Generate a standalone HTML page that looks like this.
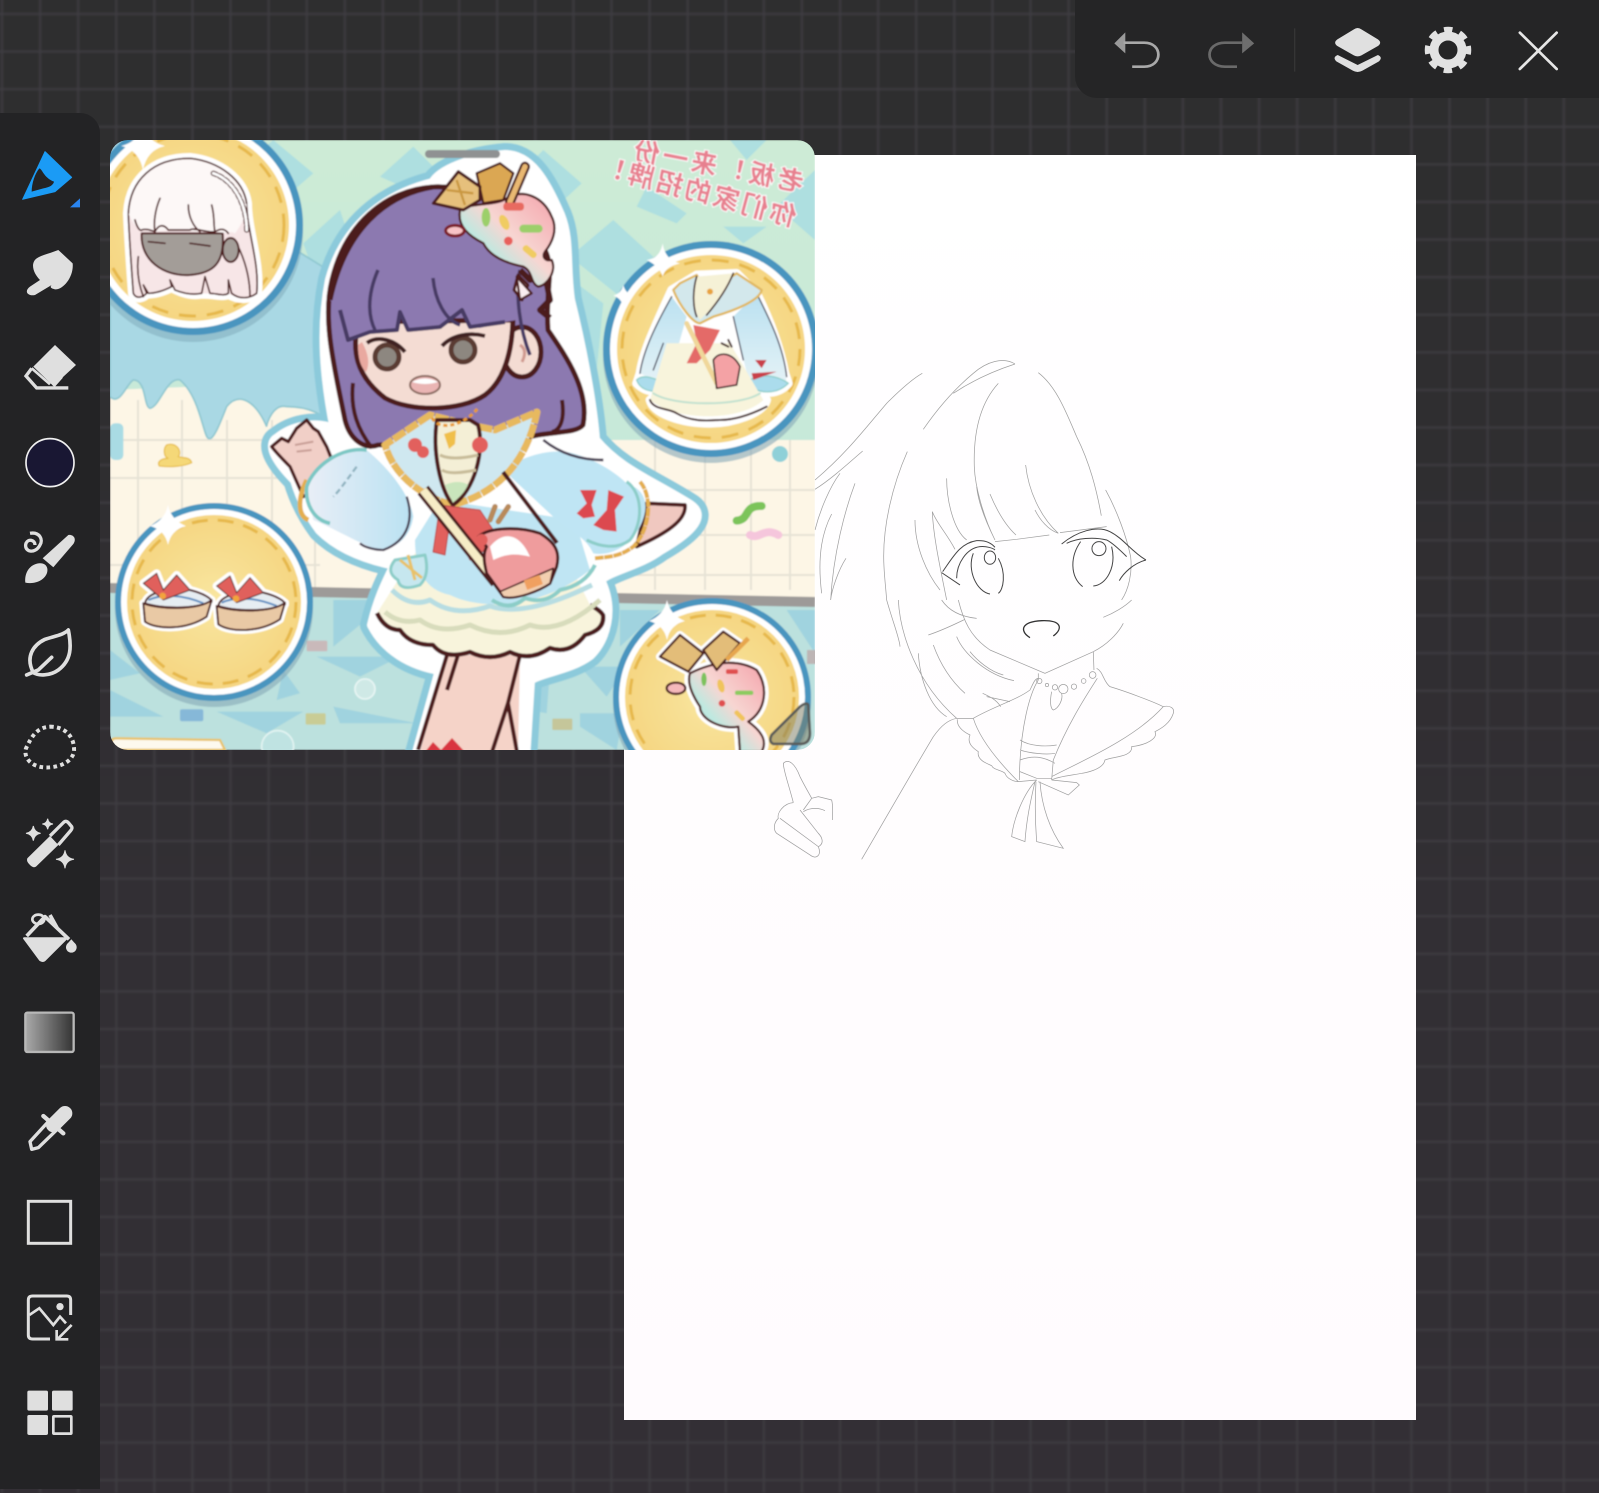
<!DOCTYPE html>
<html><head><meta charset="utf-8"><title>Canvas</title>
<style>
html,body{margin:0;padding:0;width:1599px;height:1489px;overflow:hidden;background:#312e33}
#bg{position:absolute;left:-4px;top:-4px;width:1607px;height:1497px;filter:blur(1px);
background-image:linear-gradient(#3f3d42 2px,transparent 2px),linear-gradient(90deg,#3f3d42 2px,transparent 2px),linear-gradient(#2e2e2f 0,#2f2e30 400px,#322f34 900px,#332f35 100%);
background-size:38.1px 37.6px,38.1px 37.6px,100% 100%;background-position:0 17px,5px 0,0 0}
#paper{position:absolute;left:624px;top:155px;width:792px;height:1265px;background:linear-gradient(#fff,#fffbfe)}
#lt{position:absolute;left:0;top:113px;width:100px;height:1376px;background:#232325;border-top-right-radius:20px}
#rt{position:absolute;left:1075px;top:0;width:524px;height:98px;background:#252526;border-bottom-left-radius:22px}
svg{position:absolute;left:0;top:0}
</style></head><body>
<div id="bg"></div><div id="paper"></div>
<svg width="1599" height="1489" viewBox="0 0 1599 1489" xmlns="http://www.w3.org/2000/svg" style="font-family:'Liberation Sans','Noto Sans CJK SC',sans-serif">
<defs>
<clipPath id="win"><rect x="110" y="140" width="705" height="610" rx="18"/></clipPath>
<linearGradient id="mint" x1="0" y1="0" x2="0" y2="1"><stop offset="0" stop-color="#cdebd6"/><stop offset="1" stop-color="#bfe6dc"/></linearGradient>
<linearGradient id="ice" x1="1" y1="0" x2="0" y2="1"><stop offset="0" stop-color="#f4a3ab"/><stop offset=".45" stop-color="#f7d6d2"/><stop offset=".65" stop-color="#bfe8e0"/><stop offset="1" stop-color="#a6e0dc"/></linearGradient>
<linearGradient id="sl" x1="0" y1="0" x2="1" y2="0"><stop offset="0" stop-color="#e9eef6"/><stop offset="1" stop-color="#b9e1f2"/></linearGradient>
<linearGradient id="sl2" x1="0" y1="0" x2="0" y2="1"><stop offset="0" stop-color="#b9e0f1"/><stop offset="1" stop-color="#e6f3f6"/></linearGradient>
<linearGradient id="grad" x1="0" y1="0" x2="1" y2="0"><stop offset="0" stop-color="#aaa"/><stop offset="1" stop-color="#333"/></linearGradient>
<radialGradient id="yel"><stop offset="0" stop-color="#f9e6a0"/><stop offset="1" stop-color="#f5d682"/></radialGradient>
<filter id="soft"><feGaussianBlur stdDeviation=".7"/></filter>
<filter id="soft2"><feGaussianBlur stdDeviation=".3"/></filter>
</defs>

<!-- sketch -->
<g filter="url(#soft2)">
<g fill="none" stroke="#a0a0a0" stroke-width="2.2" transform="translate(760 340) scale(.3333)">
<path d="M165 420C260 340 320 260 380 190C420 150 460 115 487 100M165 448C210 420 260 375 308 333M490 268C530 210 580 150 640 100C680 65 730 50 765 72M580 160C640 120 710 90 765 72M715 130C660 190 640 280 643 380C645 440 670 530 705 600M835 98C890 140 920 220 950 290C990 370 1010 450 1024 527M797 375C805 450 840 530 895 580M825 510C840 540 865 570 895 580M690 462C710 510 735 555 768 585M650 440C655 490 680 550 705 600M705 605L770 598L868 585M900 578L1040 560M1037 450C1070 510 1100 590 1112 650C1118 700 1105 750 1085 780M442 335C400 430 365 560 372 680C374 720 378 750 380 780M285 430C255 510 220 640 212 780M215 522C190 570 170 640 185 760M240 400C210 440 180 510 165 570M560 415C560 480 580 570 620 600M585 628C560 580 530 550 517 515C520 590 540 680 560 780M465 540C465 620 500 700 540 750M258 655C235 690 215 750 212 780"/>
<g stroke="#454545" stroke-width="3">
<path d="M548 695C580 650 600 610 650 602C680 600 695 610 705 622M590 715C590 670 620 625 660 620C680 618 700 625 705 630M545 698L600 735M640 640C620 690 650 755 690 762M715 655C740 700 730 750 715 760"/><ellipse cx="690" cy="653" rx="17" ry="20"/>
<path d="M905 612C950 575 1010 555 1050 575C1090 595 1115 635 1158 660M920 610C950 595 1000 590 1040 600C1060 610 1090 640 1100 650M1158 660C1120 670 1090 700 1078 722M962 605C930 650 930 710 968 740M1000 738C1040 735 1070 680 1055 620"/><circle cx="1017" cy="626" r="21"/>
</g></g>
<g fill="none" stroke="#a0a0a0" stroke-width="2.2" transform="translate(760 600) scale(.3333)">
<path d="M810 113C780 95 780 65 845 62C905 60 910 85 880 108" stroke="#333" stroke-width="4"/>
<path d="M595 0C610 60 630 110 690 150L855 220L1000 155C1040 135 1075 100 1090 70M1000 155L1002 210M835 220L835 240M380 0C400 70 420 120 420 140M415 0C420 100 470 250 590 355M475 160C480 240 510 320 560 350M520 135C540 190 570 240 615 280M590 110C610 160 680 225 762 242M630 155C650 180 690 215 730 225M505 105C550 90 590 70 615 58M668 280C690 290 710 300 722 320M680 290L750 305M545 0C565 30 600 50 650 55M1030 52C1060 40 1095 20 1115 0"/>
<path d="M305 778C380 650 460 510 520 410C545 375 565 360 590 355L640 355C700 320 770 300 810 270C820 250 825 235 835 235M640 355C660 420 720 490 775 545M592 358C590 380 610 395 630 405C620 430 640 445 655 455C650 480 680 490 695 497C700 510 725 510 735 520C740 535 760 545 775 545L830 540M835 240C810 280 780 380 778 540M1012 235C970 300 920 380 880 480L875 540M875 530C950 490 1120 420 1210 320C1180 305 1100 275 1050 260C1030 245 1030 215 1010 205M1210 320C1230 315 1245 325 1240 340C1230 370 1205 385 1185 395C1195 415 1160 435 1115 440C1120 470 1060 470 1035 480C1030 510 970 520 965 520C940 525 890 530 875 540M875 540L950 548L958 555L925 585L835 545M830 540C790 580 760 660 755 710L795 725C800 650 815 590 825 545M840 545C845 620 870 690 910 745L830 725C825 660 825 600 828 545M780 515L830 535L875 535M780 420C810 440 860 440 890 435M780 450C810 460 860 465 885 460M780 480C820 465 850 470 885 490"/>
<circle cx="838" cy="243" r="8"/><circle cx="861" cy="255" r="5"/><circle cx="885" cy="262" r="8"/><circle cx="910" cy="267" r="14"/><circle cx="942" cy="260" r="8"/><circle cx="971" cy="243" r="7"/><circle cx="998" cy="225" r="10"/>
<path d="M875 275C870 300 870 325 880 330C895 325 910 300 905 280"/>
<path d="M100 608C85 550 70 510 70 490C85 475 105 490 120 530C135 560 150 585 155 595L130 630M155 595L175 590L215 600C220 620 218 640 217 660M130 635C155 620 180 625 195 632M100 608C70 610 50 640 55 655C40 670 40 690 50 700L150 765C170 780 185 765 175 740C195 730 185 710 175 700L120 630M60 655L175 740"/>
</g></g>

<!-- reference image window -->
<g clip-path="url(#win)"><g filter="url(#soft)">
<rect x="110" y="140" width="705" height="610" fill="url(#mint)"/>
<g transform="translate(480 130) scale(.3333)" fill="#aedfe0">
<polygon points="190,60 305,160 230,230 120,130"/><polygon points="400,270 520,380 420,500 270,380"/><polygon points="500,170 620,250 590,280 470,230"/><polygon points="750,30 860,30 800,90"/><polygon points="890,230 1005,330 1005,120"/><polygon points="730,290 860,290 790,340"/><polygon points="250,430 370,520 350,720 240,620"/>
</g>
<g transform="translate(100 130) scale(.3333)" fill="#aedfe0"><polygon points="520,30 640,130 570,190 450,90"/><polygon points="840,140 940,50 1010,120 930,180"/><polygon points="610,340 720,240 760,360 660,480"/></g>
<polygon points="110,390 360,380 600,500 600,440 815,440 815,604 110,592" fill="#fdf6e6"/>
<g stroke="#e6e2d6" stroke-width="2" fill="none"><path d="M110 440H340M110 478H310M110 565H320M610 490H815M610 535H815M600 575H815M138 400V590M182 400V590M227 420V590M272 420V590M315 500V590M655 440V590M705 440V590M751 440V590M790 440V590"/></g>
<g transform="translate(100 130) scale(.3333)">
<path d="M30 30H360L330 200 700 430V900C680 850 620 830 560 830C520 820 500 880 500 890C470 820 420 780 380 830C360 880 340 935 325 925C310 920 300 800 240 750C200 740 180 830 150 835C130 830 140 750 100 750C80 760 60 830 30 800Z" fill="#a9d8e4" stroke="#8fc7d0" stroke-width="5"/>
<rect x="30" y="880" width="40" height="110" rx="15" fill="#a9dbe4"/>
</g>
<polygon points="110,592 815,604 815,750 110,750" fill="#bce1de"/>
<g transform="translate(100 440) scale(.3333)" fill="#a0d3df"><polygon points="30,630 120,700 30,720"/><polygon points="650,650 900,650 780,710"/><polygon points="30,750 190,830 30,830"/><polygon points="350,815 610,815 500,880"/><polygon points="700,800 950,850 720,850"/><polygon points="700,480 810,480 810,530 700,620"/><polygon points="550,690 600,760 530,780"/></g>
<g transform="translate(440 440) scale(.3333)" fill="#a0d3df"><polygon points="260,680 330,690 320,820 260,810"/><polygon points="420,680 560,680 500,770"/><polygon points="420,820 550,820 530,930 420,860"/><polygon points="540,510 660,510 540,620"/><polygon points="1040,510 1125,510 1125,640"/></g>
<line x1="110" y1="588" x2="815" y2="602" stroke="#9d9a98" stroke-width="10"/>
<rect x="807" y="650" width="10" height="14" fill="#bdb5b5"/>
<g transform="translate(100 440) scale(.3333)">
<rect x="620" y="602" width="62" height="32" rx="4" fill="#c9b9ba"/><rect x="240" y="808" width="70" height="36" rx="6" fill="#86b8d8"/><rect x="617" y="820" width="60" height="34" rx="4" fill="#c9cc95"/>
<circle cx="795" cy="747" r="30" fill="#cfe9e6" stroke="#e9f6f4" stroke-width="5"/><circle cx="533" cy="920" r="48" fill="#bfe3e2" stroke="#e3f4f2" stroke-width="5"/>
<path d="M35 930V905Q35 895 50 895L360 900L375 930Z" fill="#fdf9ee" stroke="#e8c26a" stroke-width="7"/>
<path d="M200 15C190 25 190 50 205 55C185 55 170 65 178 78C210 82 250 80 275 68C270 50 250 55 235 50C248 30 225 5 200 15Z" fill="#f5d878" stroke="#e8c050" stroke-width="4"/>
</g>
<g transform="translate(440 440) scale(.3333)" fill="none" stroke-linecap="round">
<rect x="337" y="836" width="60" height="34" rx="3" fill="#c5c69a"/>
<path d="M890 242C930 240 910 195 965 198" stroke="#7bc45a" stroke-width="24"/>
<path d="M930 285C960 300 970 260 1015 285" stroke="#f5c6dc" stroke-width="24"/>
<circle cx="1020" cy="42" r="24" fill="#8fd0d8"/>
</g>

<!-- circle 1 -->
<circle cx="193" cy="232" r="110" fill="#86b1bf" opacity=".6"/><circle cx="193" cy="225" r="110" fill="#4a95bf"/><circle cx="193" cy="225" r="103" fill="#fff"/><circle cx="193" cy="225" r="96" fill="url(#yel)"/><circle cx="193" cy="225" r="91" fill="none" stroke="#e6b84c" stroke-width="3" stroke-dasharray="17 11"/>
<path d="M143 122Q147 142 165 146Q147 150 143 170Q139 150 121 146Q139 142 143 122Z" fill="#fff"/>
<g transform="translate(100 130) scale(.3333)" stroke="#4c1a1d" stroke-width="6" stroke-linejoin="round" stroke-linecap="round">
<path d="M270 85C160 85 90 150 85 250C88 330 95 420 100 490C110 510 130 500 140 490C170 490 195 480 215 470C250 490 280 495 305 490C350 490 370 500 385 490C420 510 450 505 470 490C480 400 440 300 440 220C430 150 360 95 270 85Z" fill="#fff" stroke="#fff" stroke-width="32"/>
<path d="M85 250C88 330 95 420 100 490C110 510 130 500 140 490C170 490 195 480 215 470C250 490 280 495 305 490C350 490 370 500 385 490C420 510 450 505 470 490C480 400 440 300 440 220L85 220Z" fill="#f7e6e7" stroke="none"/>
<path d="M115 380C110 420 115 460 130 500M85 250C88 330 95 420 100 490C110 510 130 500 140 490L130 465L145 490C170 490 195 480 215 470L210 450L225 480C250 490 280 495 305 490L315 440L330 490C350 490 370 500 385 490L385 450L395 490C420 510 450 505 470 490C480 400 440 300 440 220M410 340C440 400 450 450 450 500" fill="none" stroke-width="5"/>
<ellipse cx="392" cy="360" rx="24" ry="36" fill="#a39d98"/>
<path d="M125 310C120 390 190 440 270 435C340 430 375 400 368 310Z" fill="#a39d98"/>
<path d="M85 250C90 150 160 85 270 85C360 95 430 150 440 220C440 260 420 290 405 310C395 305 390 305 385 310L345 305L300 305L205 300L165 305L125 300C110 295 95 275 85 250Z" fill="#fdf8f7" stroke="none"/>
<path d="M85 250C90 150 160 85 270 85C360 95 430 150 440 220M105 270C110 290 120 305 125 300C135 295 150 300 165 305C175 285 190 280 205 300L270 300C280 290 320 310 345 305C355 300 370 290 385 310M180 205C165 240 160 280 165 305M265 225C265 260 280 290 300 305M335 225C345 260 340 290 345 305" fill="none" stroke-width="5"/>
<path d="M145 335L195 340M270 340L330 348" fill="none" stroke-width="5"/>
<path d="M340 130C400 150 440 220 440 300" fill="none" stroke-width="16" stroke-dasharray="10 10"/>
<path d="M340 130C400 150 440 220 440 300" fill="none" stroke="#fff" stroke-width="9" stroke-dasharray="14 6"/>
</g>

<!-- circle 2 -->
<circle cx="711" cy="355" r="108" fill="#86a9b8" opacity=".6"/><circle cx="711" cy="349" r="108" fill="#4a95bf"/><circle cx="711" cy="349" r="101" fill="#fff"/><circle cx="711" cy="349" r="94" fill="url(#yel)"/><circle cx="711" cy="349" r="89" fill="none" stroke="#e6b84c" stroke-width="3" stroke-dasharray="17 11"/>
<g transform="translate(480 130) scale(.3333)" stroke-linejoin="round" stroke-linecap="round">
<path d="M548 340Q555 390 600 400Q555 410 548 440Q540 410 500 390Q540 385 548 340Z" fill="#fff"/><path d="M430 465Q436 490 460 497Q436 502 430 530Q424 505 400 497Q424 490 430 465Z" fill="#fff"/>
<path d="M575 480C530 580 490 660 480 730L470 760C500 790 540 790 560 770L510 810C520 850 600 880 690 880C760 880 850 850 860 810L800 770C850 800 900 790 925 760L915 730C900 650 870 570 830 490L770 430L650 435Z" fill="#fff" stroke="#fff" stroke-width="26"/>
<path d="M575 500C530 580 490 660 480 730L560 770L620 560ZM760 560L830 490C870 570 910 650 920 760L810 770Z" fill="url(#sl2)"/>
<path d="M575 500C530 580 490 660 480 730M550 640L520 720M830 490C870 570 910 650 920 740M760 560L790 690" fill="none" stroke="#3f3f55" stroke-width="4"/>
<path d="M470 750C490 730 520 745 560 760L540 785C510 785 480 780 470 750ZM810 750C840 730 890 735 925 760C890 795 840 790 810 770Z" fill="#abdcec" stroke="#8ccdc8" stroke-width="4"/>
<path d="M560 640L750 640L850 810C790 870 600 880 510 810Z" fill="#f8f4dc"/>
<path d="M520 790C580 830 780 830 840 790" fill="none" stroke="#bfe0cf" stroke-width="6"/>
<path d="M510 810C520 840 570 835 590 850C640 880 700 870 720 870C780 870 840 840 860 830" fill="none" stroke="#3d1c1e" stroke-width="6"/>
<path d="M600 460L580 480C600 530 640 580 660 580L700 560C770 540 840 510 845 480L770 430L740 450L660 450L650 435Z" fill="#d3e8ec" stroke="#e0b860" stroke-width="7"/>
<path d="M650 440C635 480 640 540 660 570C700 530 750 480 760 430Z" fill="#f5f1d6"/>
<path d="M650 440C638 480 638 530 650 560M760 430C740 480 710 520 680 555" fill="none" stroke="#3d1c1e" stroke-width="5"/>
<path d="M640 585L720 600L690 660L650 700L620 700L650 640Z" fill="#e46a68"/>
<line x1="620" y1="580" x2="710" y2="760" stroke="#f0d79a" stroke-width="14"/>
<path d="M700 690C720 660 760 670 780 710L770 765L710 775Z" fill="#f4a2a5" stroke="#3d1c1e" stroke-width="5"/>
<path d="M725 640L745 650M745 630L755 650" stroke="#3d1c1e" stroke-width="6"/>
<path d="M825 690L860 690L845 715ZM815 730L890 725L820 750Z" fill="#c93f4a"/>
<circle cx="690" cy="485" r="9" fill="#e8a33c"/>
</g>

<!-- circle 3 -->
<circle cx="214" cy="608" r="99" fill="#85a8b5" opacity=".6"/><circle cx="214" cy="602" r="99" fill="#4a95bf"/><circle cx="214" cy="602" r="93" fill="#fff"/><circle cx="214" cy="602" r="87" fill="url(#yel)"/><circle cx="214" cy="602" r="82" fill="none" stroke="#e6b84c" stroke-width="3" stroke-dasharray="16 10"/>
<path d="M168 505Q171 520 186 526Q171 530 168 545Q165 530 150 526Q165 520 168 505Z" fill="#fff"/>
<g transform="translate(100 440) scale(.3333)" stroke-linejoin="round">
<g stroke="#fff" stroke-width="24"><path d="M130 490L135 545C170 570 260 570 320 530L335 480C300 510 180 510 130 490Z" fill="#fff"/><path d="M135 490C140 460 200 440 270 450C310 460 335 475 335 485L130 490ZM130 430L170 400L190 450L230 405L270 450L190 480Z" fill="#fff"/></g>
<g transform="translate(220 8)" stroke="#fff" stroke-width="24"><path d="M130 490L135 545C170 570 260 570 320 530L335 480C300 510 180 510 130 490Z" fill="#fff"/><path d="M135 490C140 460 200 440 270 450C310 460 335 475 335 485L130 490ZM130 430L170 400L190 450L230 405L270 450L190 480Z" fill="#fff"/></g>
<g stroke="#4c1a1d" stroke-width="6">
<path d="M135 490C140 460 200 440 270 450C310 460 335 475 335 485C280 510 180 505 135 490Z" fill="#e6edf2"/><path d="M145 480C190 460 250 465 310 490" fill="none" stroke="#5a8cc0"/><path d="M130 490L135 545C170 570 260 570 320 530L335 480C300 510 180 510 130 490Z" fill="#e9c9a5"/><path d="M130 430L170 400L190 450L230 405L270 450L190 480Z" fill="#e0605c" stroke-width="3"/><circle cx="188" cy="468" r="10" fill="#f2a43c" stroke="none"/>
</g>
<g transform="translate(220 8)" stroke="#4c1a1d" stroke-width="6">
<path d="M135 490C140 460 200 440 270 450C310 460 335 475 335 485C280 510 180 505 135 490Z" fill="#e6edf2"/><path d="M145 480C190 460 250 465 310 490" fill="none" stroke="#5a8cc0"/><path d="M130 490L135 545C170 570 260 570 320 530L335 480C300 510 180 510 130 490Z" fill="#e9c9a5"/><path d="M130 430L170 400L190 450L230 405L270 450L190 480Z" fill="#e0605c" stroke-width="3"/><circle cx="188" cy="468" r="10" fill="#f2a43c" stroke="none"/>
</g></g>

<!-- circle 4 -->
<circle cx="712" cy="703" r="99" fill="#85a8b5" opacity=".6"/><circle cx="712" cy="697" r="99" fill="#4a95bf"/><circle cx="712" cy="697" r="93" fill="#fff"/><circle cx="712" cy="697" r="87" fill="url(#yel)"/><circle cx="712" cy="697" r="82" fill="none" stroke="#e6b84c" stroke-width="3" stroke-dasharray="16 10"/>
<path d="M667 600Q670 615 685 621Q670 625 667 640Q664 625 649 621Q664 615 667 600Z" fill="#fff"/>
<g transform="translate(440 440) scale(.3333)" stroke="#4c1a1d" stroke-width="7" stroke-linejoin="round">
<path d="M750 700C830 660 900 660 950 690C985 740 980 810 925 845C960 870 985 900 965 935L900 935L895 860C850 870 780 840 780 800C760 770 740 730 750 700Z" fill="#fff" stroke="#fff" stroke-width="28"/>
<path d="M720 585L790 640L745 695L660 650ZM790 630L850 575L900 610L830 690Z" fill="#fff" stroke="#fff" stroke-width="24"/>
<path d="M750 700C830 660 900 660 950 690C985 740 980 810 925 845C960 870 985 900 965 935L900 935L895 860C850 870 780 840 780 800C760 770 740 730 750 700Z" fill="url(#ice)"/>
<path d="M720 585L790 640L745 695L660 650Z" fill="#e3bd79"/><path d="M790 630L850 575L900 610L830 690Z" fill="#e3bd79"/>
<path d="M860 660L925 595" stroke="#e6a64d" stroke-width="14"/>
<ellipse cx="708" cy="745" rx="28" ry="17" fill="#f5b9bb"/>
<g stroke="none"><rect x="858" y="688" width="36" height="14" rx="5" fill="#e05050"/><ellipse cx="792" cy="718" rx="8" ry="20" fill="#7cc25c"/><rect x="885" y="752" width="55" height="13" rx="6" fill="#8ccb5e"/><ellipse cx="843" cy="738" rx="10" ry="20" fill="#f0c45c" transform="rotate(-15 843 738)"/><circle cx="846" cy="790" r="10" fill="#e05050"/><rect x="880" y="820" width="38" height="14" rx="6" fill="#f0c45c" transform="rotate(45 899 827)"/></g>
</g>

<!-- character -->
<g stroke-linejoin="round">
<path d="M433 183C440 170 470 158 505 155C530 155 545 180 560 215C570 240 565 265 570 300C580 340 592 400 595 440C620 470 650 480 690 505C705 515 695 530 660 550C640 565 610 570 600 580C615 610 605 640 590 655C570 670 540 672 530 680L525 760L415 760L440 670C410 665 385 650 372 625C378 600 385 585 395 565C370 560 340 550 320 530C305 510 298 490 295 480C280 465 265 445 278 438C290 428 315 420 335 430C325 380 320 330 330 280C345 225 385 195 433 183Z" fill="#bfe3ea" stroke="#8ccadb" stroke-width="24"/>
<path d="M433 183C440 170 470 158 505 155C530 155 545 180 560 215C570 240 565 265 570 300C580 340 592 400 595 440C620 470 650 480 690 505C705 515 695 530 660 550C640 565 610 570 600 580C615 610 605 640 590 655C570 670 540 672 530 680L525 760L415 760L440 670C410 665 385 650 372 625C378 600 385 585 395 565C370 560 340 550 320 530C305 510 298 490 295 480C280 465 265 445 278 438C290 428 315 420 335 430C325 380 320 330 330 280C345 225 385 195 433 183Z" fill="#fff" stroke="#fff" stroke-width="10"/>
<!-- legs -->
<polygon points="447,655 420,752 518,752 520,655" fill="#f5d3c8"/>
<path d="M447 655L418 750M520 655L508 703L517 752M508 703L492 752M458 655L447 690" fill="none" stroke="#4c1a1d" stroke-width="4"/>
<path d="M425 752L433 742L441 750L452 738L465 752Z" fill="#d9343f"/>
<!-- left hand -->
<g transform="translate(100 130) scale(.3333)"><path d="M515 950L545 925L565 935L590 895L620 870L640 895L655 905L680 950L720 1050L610 1100L570 1010C550 990 530 970 515 950Z" fill="#f1cfc7" stroke="#4c1a1d" stroke-width="10"/><path d="M585 945L640 935M590 965L635 960" stroke="#c79d95" stroke-width="6" fill="none"/></g>
<!-- skirt -->
<path d="M377 613Q385 630 400 630Q410 645 433 645Q445 660 470 652Q490 662 510 652Q530 662 550 648Q570 655 585 635Q605 630 603 615Q600 610 590 605L560 545L430 530Z" fill="#f8f4dc"/>
<path d="M377 613Q385 630 400 630Q410 645 433 645Q445 660 470 652Q490 662 510 652Q530 662 550 648Q570 655 585 635Q605 630 603 615Q600 610 590 605" fill="none" stroke="#4c1a1d" stroke-width="4.5"/>
<path d="M415 540C415 570 425 590 450 595C480 610 540 610 590 570L575 520L440 500Z" fill="#bfe5f3"/>
<path d="M385 612Q400 625 420 620Q440 635 470 625Q500 640 530 625Q560 635 600 600" fill="none" stroke="#d8dcbc" stroke-width="5"/>
<path d="M392 590Q410 608 430 600Q455 618 490 606Q525 618 592 585" fill="none" stroke="#b7dde2" stroke-width="5"/>
<path d="M492 600Q510 612 525 598Q545 605 560 590Q585 585 595 565" fill="none" stroke="#8ccdc8" stroke-width="4"/>
<path d="M395 560Q385 572 398 580Q400 592 420 585Q430 575 425 555Z" fill="#c6e7ef" stroke="#8ccdc8" stroke-width="3"/>
<path d="M400 560L422 578M408 555L415 580" stroke="#e8c26a" stroke-width="3"/>
<!-- right sleeve -->
<g transform="translate(440 440) scale(.3333)">
<path d="M620 190L735 195C740 240 680 280 590 320Z" fill="#f0c8c0" stroke="#4c1a1d" stroke-width="11"/>
<path d="M190 90C230 60 320 20 400 40C470 60 530 100 560 130C620 150 630 200 600 260C570 320 510 350 460 340C440 300 420 290 350 240Z" fill="#bfe5f4"/>
<path d="M600 125C640 170 630 270 580 320C540 350 510 350 465 355" fill="none" stroke="#e3ae50" stroke-width="12" stroke-dasharray="26 2"/>
<path d="M560 125C610 160 610 250 570 300C530 330 480 320 440 300" fill="none" stroke="#8ccdc8" stroke-width="9"/>
<path d="M420 150L470 150L455 195L465 230L430 235L410 220L440 190Z" fill="#dc4a4f"/><path d="M505 150L552 170L525 210L530 275L490 270L460 255L500 210Z" fill="#dc4a4f"/>
<path d="M310 0C360 40 420 60 490 60" fill="none" stroke="#4a3f52" stroke-width="8"/>
</g>
<!-- left sleeve -->
<g transform="translate(100 440) scale(.3333)">
<path d="M620 120C595 170 590 225 625 240" fill="none" stroke="#e3ae50" stroke-width="14"/>
<path d="M620 140C640 80 720 20 800 30C860 80 930 160 940 230C930 300 880 330 830 330C760 300 690 260 640 240Z" fill="url(#sl)"/>
<path d="M620 140C640 80 720 20 800 30M620 140C615 190 640 240 690 250" fill="none" stroke="#7cc7c4" stroke-width="11"/>
<path d="M920 170C940 230 930 300 850 330C820 330 790 320 780 310" fill="none" stroke="#4a3f52" stroke-width="7"/>
<path d="M770 80C740 120 720 150 700 170" fill="none" stroke="#8fb2c0" stroke-width="7" stroke-dasharray="18 10"/>
</g>
<!-- hair back -->
<path d="M433 187C385 190 345 225 332 280C322 320 335 370 345 420C350 440 365 450 378 445L520 440C545 430 575 435 583 425C590 390 565 355 548 330C545 290 555 270 545 250C520 210 480 185 433 187Z" fill="#8c79b0" stroke="#4c1a1d" stroke-width="5"/>
<path d="M353 383C350 410 358 430 372 448M562 400C565 420 560 430 552 432" fill="none" stroke="#4c1a1d" stroke-width="4"/>
<!-- bodice -->
<path d="M430 415L385 445C395 480 430 500 453 505C490 495 525 470 537 412L495 430L470 425Z" fill="#cfe8f0" stroke="#e7b95f" stroke-width="7" stroke-dasharray="14 1"/>
<path d="M437 420L470 420L478 425C485 450 475 490 453 505C440 490 432 450 437 420Z" fill="#f4efd6" stroke="#4c1a1d" stroke-width="4"/>
<path d="M440 455C450 460 465 458 478 455M442 470C450 475 465 472 476 470" fill="none" stroke="#c8bc9a" stroke-width="3"/>
<path d="M445 485C455 480 465 482 468 485C462 497 455 500 453 503Z" fill="#c9e5bc"/>
<circle cx="415" cy="445" r="7" fill="#e2605d"/><circle cx="423" cy="452" r="6" fill="#e2605d"/><circle cx="480" cy="445" r="8" fill="#e2605d"/>
<path d="M432 418C440 432 465 425 478 408" fill="none" stroke="#e89a30" stroke-width="3" stroke-dasharray="4 3"/>
<path d="M444 434L456 430L455 444L449 449Z" fill="#f0bf4a"/>
<!-- ear -->
<ellipse cx="522" cy="352" rx="19" ry="25" fill="#f4dcd3" stroke="#4c1a1d" stroke-width="5"/>
<path d="M520 345Q528 350 522 362" stroke="#d09a90" stroke-width="3" fill="none"/>
<!-- face -->
<path d="M358 322C352 350 355 375 385 398C410 412 460 412 485 395C505 380 512 350 513 320Z" fill="#f4dcd3" stroke="#4c1a1d" stroke-width="5"/>
<circle cx="387" cy="357" r="12" fill="#8d8780" stroke="#5a3a32" stroke-width="5"/>
<circle cx="463" cy="350" r="12" fill="#8d8780" stroke="#5a3a32" stroke-width="5"/>
<path d="M367 343C378 335 395 340 405 352M442 346C452 335 470 332 485 336" fill="none" stroke="#3f2022" stroke-width="4"/>
<ellipse cx="425" cy="385" rx="15" ry="9" fill="#eab5b4" stroke="#8a6a60" stroke-width="2"/><path d="M412 382Q425 375 438 382Q425 386 412 382Z" fill="#fff"/>
<path d="M358 345Q358 365 366 372Q372 360 362 342Z" fill="#e9a9a0"/>
<!-- bangs -->
<path d="M330 300C345 230 385 195 433 187C480 185 525 215 540 260L528 318L505 322L480 328L470 327L462 310L440 327L408 330L400 312L397 330L370 332L348 340L340 310Z" fill="#8c79b0"/>
<path d="M340 310L348 340L370 332L397 330L400 312L408 330L440 327L462 310L470 327L505 322" fill="none" stroke="#463a63" stroke-width="4"/>
<path d="M378 270C365 300 370 320 375 330M433 278C435 300 445 320 460 325M520 270C515 295 520 330 530 355" fill="none" stroke="#463a63" stroke-width="3.5"/>
<path d="M330 300C345 230 385 195 433 187C480 185 525 215 545 250" fill="none" stroke="#4c1a1d" stroke-width="5"/>
<!-- braid -->
<path d="M520 270L530 280L545 275L550 300L540 310L550 318" fill="none" stroke="#4c1a1d" stroke-width="6"/>
<path d="M518 275L528 285L522 300L514 290Z" fill="#fbeef0" stroke="#4c1a1d" stroke-width="3"/>
<!-- strap & bow -->
<path d="M440 505L480 510L500 540L470 560L450 520L445 555L433 552Z" fill="#e2605d" stroke="#b64648" stroke-width="1"/>
<line x1="423" y1="490" x2="497" y2="582" stroke="#4c1a1d" stroke-width="14"/><line x1="423" y1="490" x2="497" y2="582" stroke="#f6ecc6" stroke-width="8"/>
<path d="M503 472L557 543" stroke="#4c1a1d" stroke-width="4"/>
<!-- bag -->
<g transform="translate(440 440) scale(.3333)" stroke="#4c1a1d" stroke-width="9">
<path d="M150 240L165 200M175 245L205 200" stroke="#b88a5a" stroke-width="16" stroke-linecap="round"/>
<path d="M115 290C150 260 240 260 300 280C350 310 360 340 350 380L330 430C300 450 230 480 190 470L140 400C130 360 130 340 140 320Z" fill="#ef9c9d"/>
<path d="M180 455L340 385L330 430C300 450 230 480 190 470Z" fill="#f2cfb0" stroke-width="5"/>
<path d="M150 320C190 270 240 280 270 350C230 340 200 340 160 360Z" fill="#fff" stroke="none"/>
<circle cx="125" cy="300" r="18" fill="#e2605d" stroke="none"/>
<rect x="255" y="412" width="50" height="30" fill="#f0a060" stroke="none" transform="rotate(-20 280 427)"/>
</g>
<!-- clip -->
<g transform="translate(480 130) scale(.3333)" stroke="#4c1a1d" stroke-width="7">
<path d="M-60 240C-20 215 40 230 80 205C130 175 190 200 215 260C235 300 215 340 195 365C185 380 195 395 215 390C230 420 205 465 175 470C150 460 160 425 130 410C80 400 30 380 10 340C-30 320 -70 290 -60 240Z" fill="url(#ice)"/>
<path d="M110 440L155 490L120 510Z" fill="#fbeef0"/>
<path d="M-10 130L60 100L100 130L70 210L10 220Z" fill="#dba752"/>
<path d="M90 215L135 110" stroke="#4c1a1d" stroke-width="30" stroke-linecap="round"/><path d="M90 215L135 110" stroke="#e9b872" stroke-width="16" stroke-linecap="round"/>
<g stroke="none"><rect x="70" y="218" width="62" height="24" rx="10" fill="#e86a60"/><ellipse cx="18" cy="262" rx="13" ry="28" fill="#9ccf6a"/><ellipse cx="73" cy="277" rx="13" ry="24" fill="#f0cc62" transform="rotate(-25 73 277)"/><rect x="118" y="284" width="70" height="24" rx="12" fill="#9ccf6a"/><circle cx="85" cy="333" r="13" fill="#e8605c"/><rect x="125" y="355" width="48" height="20" rx="9" fill="#f0cc62" transform="rotate(40 149 365)"/></g>
</g>
<g transform="translate(100 130) scale(.3333)" stroke="#4c1a1d" stroke-width="9"><path d="M1000 220L1075 125L1140 170L1140 210L1090 240Z" fill="#e6c07c"/><path d="M1040 180L1120 190M1070 150L1095 225" stroke="#c9973f" stroke-width="7" fill="none"/><ellipse cx="1065" cy="302" rx="28" ry="16" fill="#f8c4c6" stroke="#7a1d28"/></g>
</g>

<!-- mirrored text -->
<g transform="translate(480 130) scale(.3333)" fill="#e7808f" stroke="#fff" stroke-width="6" paint-order="stroke" font-weight="700">
<text transform="translate(965 185) scale(-1 1) rotate(-11)" font-size="78" letter-spacing="10">老板！来一份</text>
<text transform="translate(940 290) scale(-1 1) rotate(-15)" font-size="80" letter-spacing="8">你们家的招牌！</text>
</g>
<rect x="425" y="150" width="75" height="8" rx="4" fill="#8f9192"/>
<g transform="translate(440 440) scale(.3333)"><path d="M1105 795L1110 880Q1110 910 1085 912L1000 912Q985 905 995 885L1080 800Q1100 785 1105 795Z" fill="#7a7a60" fill-opacity=".5" stroke="#585a58" stroke-width="8"/></g>
</g></g>
</svg>

<div id="lt"></div><div id="rt"></div>

<svg width="1599" height="1489" viewBox="0 0 1599 1489" xmlns="http://www.w3.org/2000/svg">
<g transform="translate(1060 0) scale(.3437 .3333)" fill="none">
<path d="M190 97L158 130L190 160Z" fill="#9a9a9a"/><path d="M185 128L245 128C300 128 300 200 245 200L210 200" stroke="#a9a9a9" stroke-width="8"/>
<path d="M530 97L565 130L530 160Z" fill="#6e6e6e"/><path d="M530 128L480 128C420 128 420 200 480 200L515 200" stroke="#6a6a6a" stroke-width="8"/>
<path d="M683 85V215" stroke="#3a3a3a" stroke-width="3"/>
<path d="M855 88Q866 80 877 88L925 118Q938 128 925 138L877 166Q866 172 855 166L807 138Q794 128 807 118Z" fill="#e0e0e0"/>
<path d="M808 165L866 195L925 165Q940 172 928 184L880 212Q866 220 852 212L804 184Q792 172 808 165Z" fill="#e0e0e0"/>
<path d="M1338 98L1445 207M1445 98L1338 207" stroke="#e6e6e6" stroke-width="8" stroke-linecap="round"/>
</g>
<g fill="none"><circle cx="1448" cy="50" r="20" stroke="#e2e2e2" stroke-width="6.5" stroke-dasharray="8.2 7.5" stroke-dashoffset="4"/><circle cx="1448" cy="50" r="14" stroke="#e2e2e2" stroke-width="9"/></g>

<g transform="translate(0 100) scale(.3333)" fill="#dfdfdf">
<path d="M135 155L215 232L165 275L68 298Z" fill="#1b9bf5" stroke="#1b9bf5" stroke-width="3" stroke-linejoin="round"/>
<path d="M118 205C128 208 130 232 162 245C160 255 150 262 130 265L95 275C95 250 105 220 118 205Z" fill="#232325"/>
<path d="M240 295L240 322L210 322Z" fill="#2a85f0"/>
<path d="M175 450L218 490C222 530 190 570 165 568C150 565 150 560 155 555L105 585C85 590 70 575 90 560L120 540C100 520 90 490 110 475C125 465 150 460 175 450Z"/>
<path d="M165 735L228 795L160 858L100 800Z"/>
<path d="M95 805L78 828L110 864H205M160 858L185 830" fill="none" stroke="#dfdfdf" stroke-width="10"/>
<path d="M95 805L150 853" fill="none" stroke="#dfdfdf" stroke-width="8"/>
<circle cx="150" cy="1088" r="72" fill="#191733" stroke="#f0f0f0" stroke-width="5"/>
<path d="M205 1305C222 1303 230 1318 220 1332L160 1402L128 1375Z"/>
<path d="M118 1390C145 1388 148 1415 135 1430C120 1448 95 1452 76 1448C73 1420 88 1393 118 1390Z"/>
<path d="M90 1300C120 1295 130 1320 120 1335C105 1365 70 1355 78 1330C85 1315 105 1320 105 1335" fill="none" stroke="#dfdfdf" stroke-width="10"/>
</g>
<g transform="translate(0 600) scale(.3333)" fill="#dfdfdf">
<path d="M205 90C215 140 215 180 175 210C150 228 115 228 100 218C75 170 100 135 135 118C165 108 190 105 205 90Z" fill="none" stroke="#dfdfdf" stroke-width="11" stroke-linejoin="round"/>
<path d="M80 225L115 210L155 172" fill="none" stroke="#dfdfdf" stroke-width="11" stroke-linecap="round"/>
<path d="M150 380C195 380 225 410 222 455C215 490 170 505 130 502C90 498 70 470 78 445C95 410 110 382 150 380Z" fill="none" stroke="#dfdfdf" stroke-width="12" stroke-dasharray="11 10"/>
<path d="M82 775L150 708L175 735L108 800Q100 805 90 795Q78 785 82 775Z"/>
<path d="M150 708L190 668Q197 660 205 668L215 680Q218 685 212 692L175 735" fill="none" stroke="#dfdfdf" stroke-width="10"/>
<path d="M100 678Q103 697 122 700Q103 703 100 722Q97 703 78 700Q97 697 100 678Z" stroke="#dfdfdf" stroke-width="3"/>
<path d="M143 656Q145 670 159 672Q145 674 143 688Q141 674 127 672Q141 670 143 656Z" stroke="#dfdfdf" stroke-width="3"/>
<path d="M195 751Q198 775 222 778Q198 781 195 805Q192 781 168 778Q192 775 195 751Z" stroke="#dfdfdf" stroke-width="3"/>
<path d="M72 1015L200 1015L135 1080Q128 1086 120 1080Z" stroke="#dfdfdf" stroke-width="6" stroke-linejoin="round"/>
<path d="M80 1008L135 950L207 1018M150 945L172 985" fill="none" stroke="#dfdfdf" stroke-width="11" stroke-linejoin="round"/>
<ellipse cx="115" cy="958" rx="18" ry="14" fill="none" stroke="#dfdfdf" stroke-width="8"/>
<circle cx="214" cy="1042" r="16"/><path d="M200 1034L214 1018L228 1034Z"/>
<rect x="76" y="1238" width="145" height="118" rx="6" fill="url(#grad)" stroke="#b8b8b8" stroke-width="7"/>
</g>
<g transform="translate(0 1050) scale(.3333)" fill="#dfdfdf">
<path d="M160 225L195 190" fill="none" stroke="#dfdfdf" stroke-width="44" stroke-linecap="round"/>
<path d="M130 198L190 250" fill="none" stroke="#dfdfdf" stroke-width="13" stroke-linecap="round"/>
<path d="M145 215L90 275L95 298L115 293L175 235" fill="none" stroke="#dfdfdf" stroke-width="10" stroke-linejoin="round"/>
<rect x="85" y="454" width="127" height="126" fill="none" stroke="#dfdfdf" stroke-width="9"/>
<path d="M212 795V750Q212 738 200 738H98Q85 738 85 750V855Q85 867 98 867H150" fill="none" stroke="#dfdfdf" stroke-width="9"/>
<path d="M88 795L118 775L160 825L180 800L198 820" fill="none" stroke="#dfdfdf" stroke-width="8"/>
<circle cx="180" cy="770" r="11"/>
<path d="M215 825L175 865M170 840V868H205" fill="none" stroke="#dfdfdf" stroke-width="8"/>
<rect x="82" y="1022" width="62" height="60" rx="5"/><rect x="156" y="1022" width="62" height="60" rx="5"/><rect x="82" y="1095" width="62" height="60" rx="5"/>
<rect x="160" y="1099" width="54" height="52" rx="2" fill="none" stroke="#dfdfdf" stroke-width="8"/>
</g>
</svg>
</body></html>
